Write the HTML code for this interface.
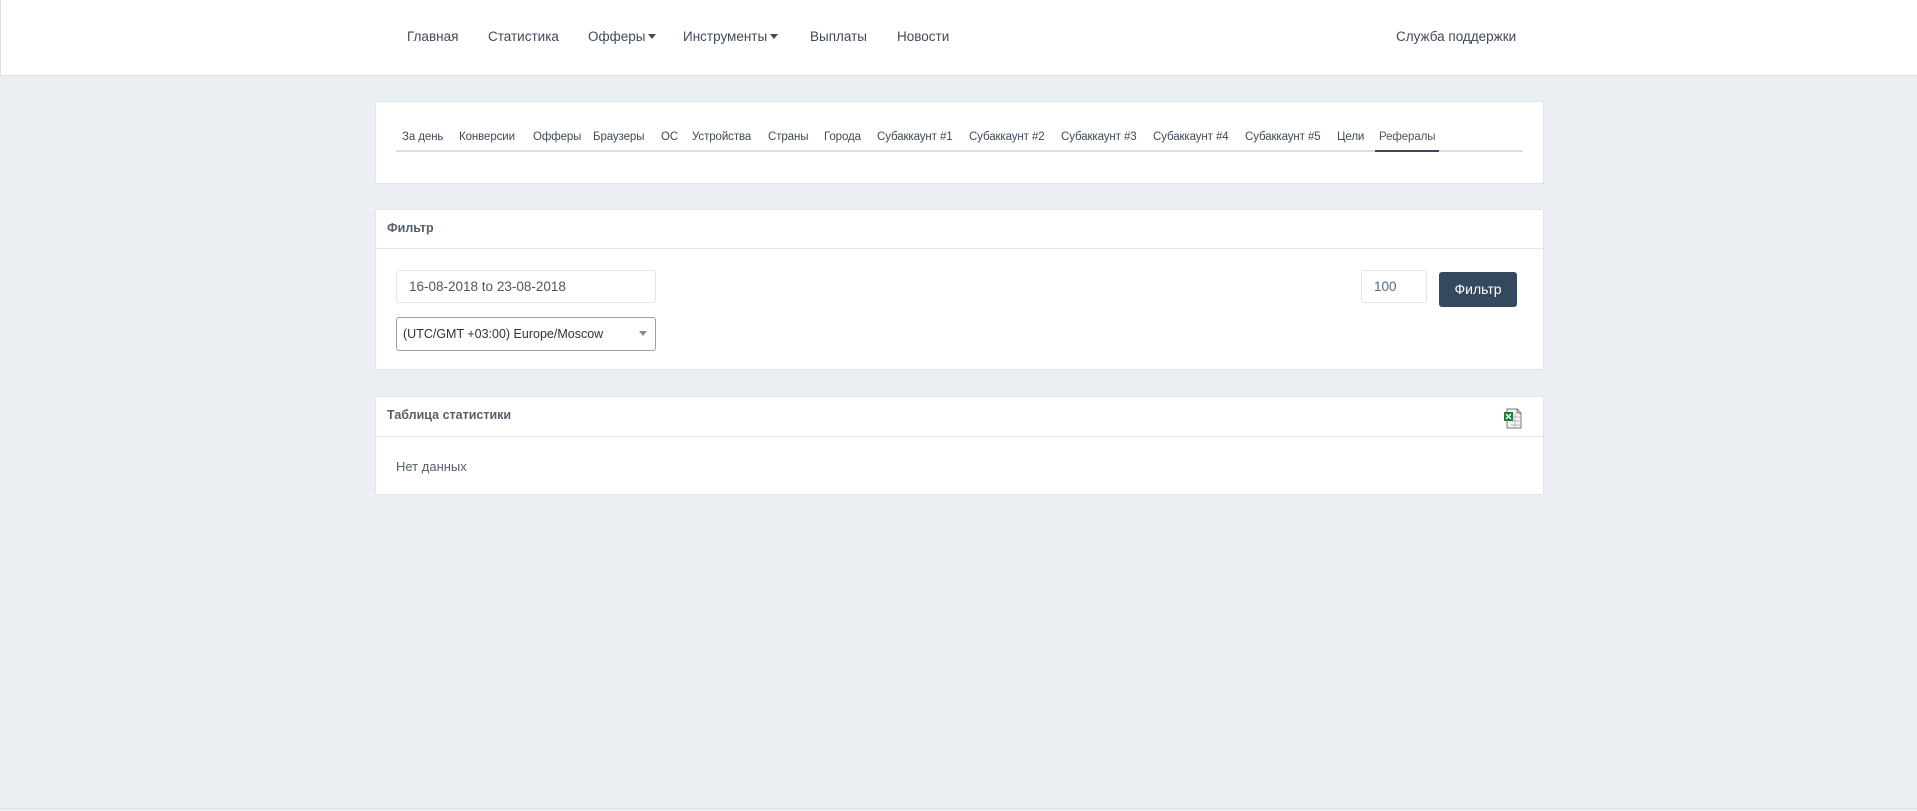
<!DOCTYPE html>
<html><head><meta charset="utf-8"><style>
*{box-sizing:border-box;margin:0;padding:0}
body{width:1917px;height:811px;background:#ebeef2;font-family:"Liberation Sans","DejaVu Sans",sans-serif;color:#4a5560;position:relative;overflow:hidden}
.hdr{position:absolute;left:0;top:0;width:1917px;height:76px;background:#fff;border-bottom:1px solid #dde1e5;border-left:1px solid #dde1e5}
.nav{position:absolute;top:29px;font-size:13.5px;color:#3f4a58}
.car{display:inline-block;width:0;height:0;border-left:4px solid transparent;border-right:4px solid transparent;border-top:5px solid #3f4a58;vertical-align:2px;margin-left:3px}
.panel{position:absolute;left:375px;width:1169px;background:#fff;border:1px solid #e0e3e7;border-radius:2px}
.tab{position:absolute;top:131px;font-size:11.5px;letter-spacing:-0.1px;color:#3f4a58}
.ph{position:absolute;left:0;right:0;top:0;border-bottom:1px solid #e3e6ea;font-size:12.5px;font-weight:bold;color:#555f6a;padding-left:11px}
.inp{position:absolute;border:1px solid #e2e5e9;border-radius:3px;font-size:13.5px;color:#555;background:#fff}
</style></head><body>
<div class="hdr">
<span class="nav" style="left:406px">Главная</span>
<span class="nav" style="left:487px">Статистика</span>
<span class="nav" style="left:587px">Офферы<i class="car"></i></span>
<span class="nav" style="left:682px">Инструменты<i class="car"></i></span>
<span class="nav" style="left:809px">Выплаты</span>
<span class="nav" style="left:896px">Новости</span>
<span class="nav" style="left:1395px">Служба поддержки</span>
</div>

<div class="panel" style="top:101px;height:83px"></div>
<div style="position:absolute;left:396px;top:150px;width:1127px;height:2px;background:#dcdfe2"></div>
<div style="position:absolute;left:1375px;top:150px;width:64px;height:2px;background:#34495e"></div>
<span class="tab" style="left:402px">За день</span>
<span class="tab" style="left:459px">Конверсии</span>
<span class="tab" style="left:533px">Офферы</span>
<span class="tab" style="left:593px">Браузеры</span>
<span class="tab" style="left:661px">ОС</span>
<span class="tab" style="left:692px">Устройства</span>
<span class="tab" style="left:768px">Страны</span>
<span class="tab" style="left:824px">Города</span>
<span class="tab" style="left:877px">Субаккаунт #1</span>
<span class="tab" style="left:969px">Субаккаунт #2</span>
<span class="tab" style="left:1061px">Субаккаунт #3</span>
<span class="tab" style="left:1153px">Субаккаунт #4</span>
<span class="tab" style="left:1245px">Субаккаунт #5</span>
<span class="tab" style="left:1337px">Цели</span>
<span class="tab" style="left:1379px;color:#555">Рефералы</span>

<div class="panel" style="top:209px;height:161px">
<div class="ph" style="height:39px;line-height:37px">Фильтр</div>
<div class="inp" style="left:20px;top:60px;width:260px;height:33px;line-height:31px;padding-left:12px">16-08-2018 to 23-08-2018</div>
<div class="inp" style="left:20px;top:107px;width:260px;height:34px;line-height:32px;padding-left:6px;border-color:#9aa0a6;font-size:12.5px;color:#333">(UTC/GMT +03:00) Europe/Moscow<span style="position:absolute;right:8px;top:13px;border-left:4px solid transparent;border-right:4px solid transparent;border-top:5px solid #888"></span></div>
<div class="inp" style="left:985px;top:60px;width:66px;height:33px;line-height:31px;padding-left:12px;color:#5a6a80">100</div>
<div style="position:absolute;left:1063px;top:62px;width:78px;height:35px;background:#34495e;border-radius:3px;color:#fff;font-size:14px;text-align:center;line-height:35px">Фильтр</div>
</div>

<div class="panel" style="top:396px;height:99px">
<div class="ph" style="height:40px;line-height:37px">Таблица статистики</div>
<svg style="position:absolute;left:1127px;top:11px" width="21" height="21" viewBox="0 0 21 21">
<path d="M4 1h10l4 4v15H4z" fill="#f4f4f4" stroke="#777"/>
<path d="M14 1v4h4" fill="none" stroke="#777"/>
<path d="M8 9h9M8 13h9M8 17h9M12 6v13" stroke="#bbb"/>
<rect x="1" y="4" width="9" height="9" fill="#1e7b34"/>
<path d="M3 6l5 5M8 6l-5 5" stroke="#fff" stroke-width="1.4"/>
</svg>
<div style="position:absolute;left:20px;top:62px;font-size:13px;color:#555f6a">Нет данных</div>
</div>
<div style="position:absolute;left:0;top:808px;width:1917px;height:1px;background:#dde1e5"></div>
</body></html>
